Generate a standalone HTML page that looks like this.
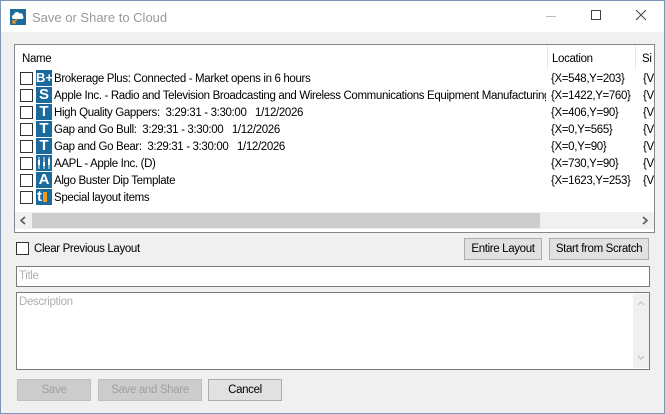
<!DOCTYPE html>
<html><head><style>
*{box-sizing:border-box;margin:0;padding:0}
body{width:665px;height:414px;overflow:hidden;font-family:"Liberation Sans",sans-serif;font-size:11.5px;letter-spacing:-0.35px;color:#000;background:#f0f0f0;position:relative}
.win{position:absolute;left:0;top:0;width:665px;height:414px;border:1px solid #7b97b8;background:#f0f0f0}
.tb{position:absolute;left:0;top:0;width:663px;height:31px;background:#fff}
.ab{position:absolute}
.lv{position:absolute;left:13px;top:43px;width:641px;height:189px;border:1px solid #828790;background:#fff;overflow:hidden}
.row{position:absolute;left:0;height:17px;white-space:nowrap}
.cb{position:absolute;width:13px;height:13px;border:1px solid #333;background:#fff}
.ic{position:absolute;left:21px;top:0;width:16px;height:16px;background:#1b6a9c;color:#fff;font-weight:bold;font-size:15px;letter-spacing:0;line-height:16px;text-align:center;overflow:hidden}
.tx{position:absolute;left:39px;top:3px;width:492px;overflow:hidden}
.loc{position:absolute;left:536px;top:3px}
.sz{position:absolute;left:628px;top:3px}
.btn{position:absolute;height:22px;border:1px solid #adadad;background:#e1e1e1;text-align:center;line-height:20px}
.dis{color:#a0a0a0;border-color:#bfbfbf;background:#cccccc}
.inp{position:absolute;background:#fff;border:1px solid #7a7a7a;color:#b0b0b0}
</style></head><body>
<div class="win">
<div class="tb">
 <svg class="ab" style="left:9px;top:8px" width="16" height="16"><rect width="16" height="16" fill="#1b6a9c"/><path d="M3 10a2.5 2.5 0 0 1 1-4.5a3 3 0 0 1 5.5-1a2.5 2.5 0 0 1 3.5 2.5a2 2 0 0 1-.5 3z" fill="#fff"/><path d="M3 14l4-4M3 11v3h3" stroke="#f39a1e" stroke-width="1.3" fill="none"/></svg>
 <div class="ab" style="left:31px;top:9px;font-size:13px;letter-spacing:0;color:#999">Save or Share to Cloud</div>
 <div class="ab" style="left:545px;top:15px;width:10px;height:1px;background:#bbb"></div>
 <div class="ab" style="left:590px;top:9px;width:10px;height:10px;border:1px solid #444"></div>
 <svg class="ab" style="left:634px;top:8px" width="12" height="12"><path d="M1 1L11 11M11 1L1 11" stroke="#444" stroke-width="1"/></svg>
</div>
<div class="lv">
 <div class="ab" style="left:7px;top:8px">Name</div>
 <div class="ab" style="left:532px;top:0;width:1px;height:24px;background:#e5e5e5"></div>
 <div class="ab" style="left:537px;top:8px">Location</div>
 <div class="ab" style="left:620px;top:0;width:1px;height:24px;background:#e5e5e5"></div>
 <div class="ab" style="left:627px;top:8px">Si</div>

 <div class="row" style="top:25px;width:640px"><div class="cb" style="left:5px;top:2px"></div><div class="ic" style="font-size:13px">B+</div><div class="tx">Brokerage Plus: Connected - Market opens in 6 hours</div><div class="loc">{X=548,Y=203}</div><div class="sz">{V</div></div>
 <div class="row" style="top:42px;width:640px"><div class="cb" style="left:5px;top:2px"></div><div class="ic">S</div><div class="tx">Apple Inc. - Radio and Television Broadcasting and Wireless Communications Equipment Manufacturing</div><div class="loc">{X=1422,Y=760}</div><div class="sz">{V</div></div>
 <div class="row" style="top:59px;width:640px"><div class="cb" style="left:5px;top:2px"></div><div class="ic">T</div><div class="tx">High Quality Gappers:&nbsp; 3:29:31 - 3:30:00&nbsp;&nbsp; 1/12/2026</div><div class="loc">{X=406,Y=90}</div><div class="sz">{V</div></div>
 <div class="row" style="top:76px;width:640px"><div class="cb" style="left:5px;top:2px"></div><div class="ic">T</div><div class="tx">Gap and Go Bull:&nbsp; 3:29:31 - 3:30:00&nbsp;&nbsp; 1/12/2026</div><div class="loc">{X=0,Y=565}</div><div class="sz">{V</div></div>
 <div class="row" style="top:93px;width:640px"><div class="cb" style="left:5px;top:2px"></div><div class="ic">T</div><div class="tx">Gap and Go Bear:&nbsp; 3:29:31 - 3:30:00&nbsp;&nbsp; 1/12/2026</div><div class="loc">{X=0,Y=90}</div><div class="sz">{V</div></div>
 <div class="row" style="top:110px;width:640px"><div class="cb" style="left:5px;top:2px"></div><div class="ic"><svg width="16" height="16"><path d="M3 2v12M8 2v12M13 2v12" stroke="#fff"/><rect x="2" y="5" width="2" height="5" fill="#fff"/><rect x="7" y="7" width="2" height="4" fill="#fff"/><rect x="12" y="4" width="2" height="6" fill="#fff"/></svg></div><div class="tx">AAPL - Apple Inc. (D)</div><div class="loc">{X=730,Y=90}</div><div class="sz">{V</div></div>
 <div class="row" style="top:127px;width:640px"><div class="cb" style="left:5px;top:2px"></div><div class="ic">A</div><div class="tx">Algo Buster Dip Template</div><div class="loc">{X=1623,Y=253}</div><div class="sz">{V</div></div>
 <div class="row" style="top:144px;width:640px"><div class="cb" style="left:5px;top:2px"></div><div class="ic" style="text-align:left;padding-left:1px">t<span style="display:inline-block;width:4px;height:10px;background:#f39a1e;vertical-align:-1px;margin-left:1px"></span></div><div class="tx">Special layout items</div></div>

 <div class="ab" style="left:0;top:167px;width:640px;height:17px;background:#f0f0f0"></div>
 <div class="ab" style="left:17px;top:168px;width:508px;height:15px;background:#cdcdcd"></div>
 <svg class="ab" style="left:4px;top:171px" width="8" height="9"><path d="M6 1L2 4.5L6 8" stroke="#555" stroke-width="1.5" fill="none"/></svg>
 <svg class="ab" style="left:626px;top:171px" width="8" height="9"><path d="M2 1L6 4.5L2 8" stroke="#555" stroke-width="1.5" fill="none"/></svg>
</div>

<div class="cb" style="left:15px;top:241px"></div>
<div class="ab" style="left:33px;top:242px">Clear Previous Layout</div>
<div class="btn" style="left:463px;top:237px;width:78px">Entire Layout</div>
<div class="btn" style="left:548px;top:237px;width:100px">Start from Scratch</div>

<div class="inp" style="left:15px;top:265px;width:634px;height:21px;padding:3px 2px">Title</div>
<div class="inp" style="left:15px;top:291px;width:634px;height:78px;padding:3px 2px">Description
 <div class="ab" style="right:0;top:1px;width:16px;height:74px;background:#f0f0f0"></div>
 <svg class="ab" style="right:4px;top:7px" width="8" height="6"><path d="M1 5L4 2L7 5" stroke="#bbb" fill="none"/></svg>
 <svg class="ab" style="right:4px;top:62px" width="8" height="6"><path d="M1 1L4 4L7 1" stroke="#bbb" fill="none"/></svg>
</div>

<div class="btn dis" style="left:16px;top:378px;width:74px">Save</div>
<div class="btn dis" style="left:97px;top:378px;width:104px">Save and Share</div>
<div class="btn" style="left:207px;top:378px;width:74px">Cancel</div>
</div>
</body></html>
